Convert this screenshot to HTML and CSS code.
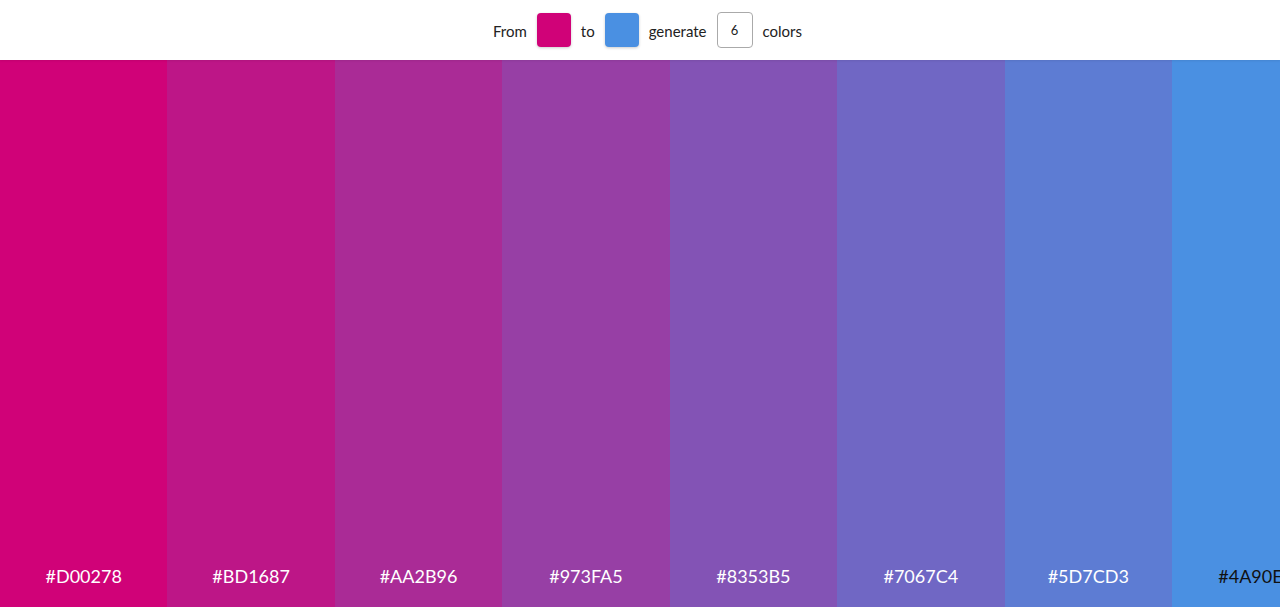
FILE: index.html
```html
<!DOCTYPE html>
<html lang="en">
<head>
  <meta charset="UTF-8" />
  <meta name="viewport" content="width=device-width, initial-scale=1.0"/>
  <title>Gradient Palette</title>
  <link rel="stylesheet" href="styles.css">
</head>
<body>

  <header>
    <span>From</span>
    <div class="swatch from"></div>
    <span>to</span>
    <div class="swatch to"></div>
    <span>generate</span>
    <div class="count">6</div>
    <span>colors</span>
  </header>

  <div class="palette">
    <div class="stripe" style="background: #D00278;"><span>#D00278</span></div>
    <div class="stripe" style="background: #BD1687;"><span>#BD1687</span></div>
    <div class="stripe" style="background: #AA2B96;"><span>#AA2B96</span></div>
    <div class="stripe" style="background: #973FA5;"><span>#973FA5</span></div>
    <div class="stripe" style="background: #8353B5;"><span>#8353B5</span></div>
    <div class="stripe" style="background: #7067C4;"><span>#7067C4</span></div>
    <div class="stripe" style="background: #5D7CD3;"><span>#5D7CD3</span></div>
    <div class="stripe dark" style="background: #4A90E2;"><span>#4A90E2</span></div>
  </div>

</body>
</html>
```

FILE: styles.css
```css
body {
  font-family: Lato, "Open Sans", sans-serif;
  margin: 0;
  padding: 0;
  overflow: hidden;
  height: 607px;
}
header {
  height: 60px;
  background: white;
  display: flex;
  justify-content: center;
  align-items: center;
  gap: 10px;
  padding-left: 15px;
  font-size: 15px;
  color: #222;
  box-shadow: 0 1px 2px rgba(0,0,0,0.08);
  position: relative;
  z-index: 1;
}
header span {
  padding-top: 2px;
}
.swatch {
  width: 34px;
  height: 34px;
  border-radius: 4px;
  box-shadow: 0 1px 3px rgba(0,0,0,0.2);
}
.swatch.from {
  background: #D00278;
}
.swatch.to {
  background: #4A90E2;
}
.count {
  width: 34px;
  height: 34px;
  border: 1px solid #aaa;
  border-radius: 4px;
  display: flex;
  align-items: center;
  justify-content: center;
  font-size: 13px;
  color: #222;
  margin-top: -1px;
}
.palette {
  display: flex;
  height: 547px;
}
.stripe {
  flex: 0 0 167.43px;
  display: flex;
  align-items: flex-end;
  justify-content: center;
  padding-bottom: 20px;
  box-sizing: border-box;
  color: white;
  font-size: 18px;
}
.stripe.dark {
  color: #111;
}
```
